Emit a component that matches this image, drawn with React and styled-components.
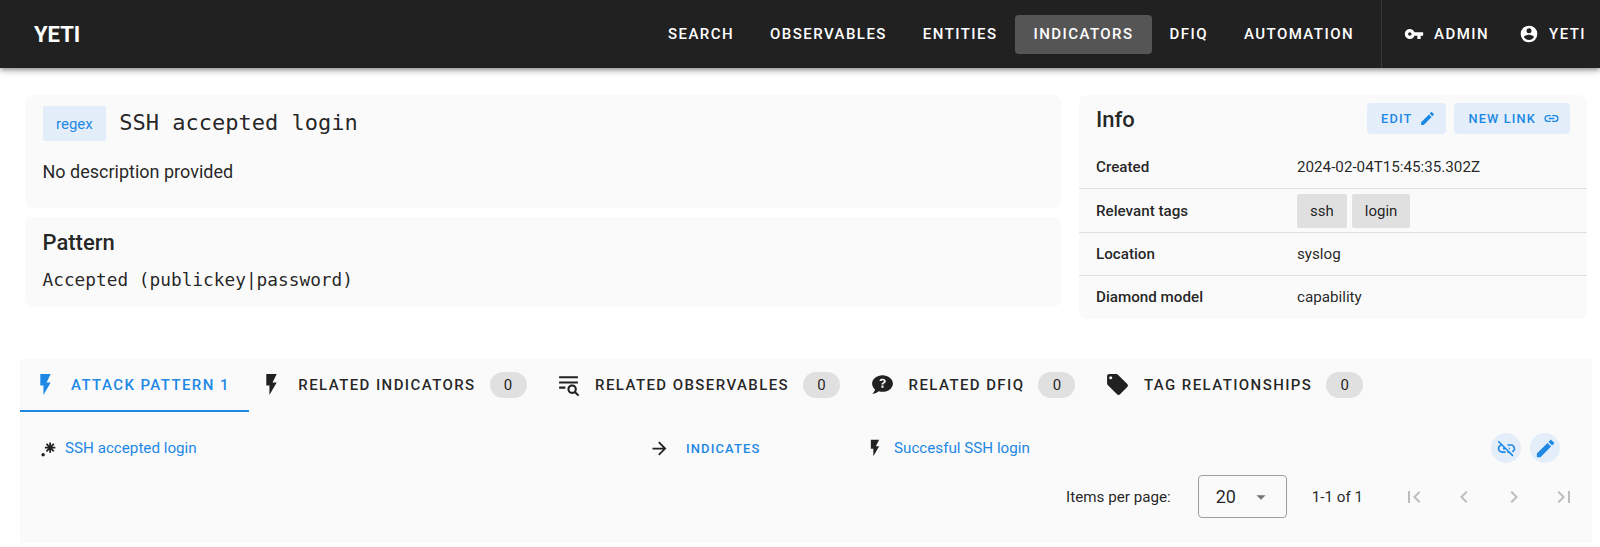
import React from 'react'
import styled, { createGlobalStyle } from 'styled-components'

const P = {
  key: 'M7 14C5.9 14 5 13.1 5 12S5.9 10 7 10 9 10.9 9 12 8.1 14 7 14M12.6 10C11.8 7.7 9.6 6 7 6C3.7 6 1 8.7 1 12S3.7 18 7 18C9.6 18 11.8 16.3 12.6 14H16V18H20V14H23V10H12.6Z',
  account: 'M12,19.2C9.5,19.2 7.29,17.92 6,16C6.03,14 10,12.9 12,12.9C14,12.9 17.97,14 18,16C16.71,17.92 14.5,19.2 12,19.2M12,5A3,3 0 0,1 15,8A3,3 0 0,1 12,11A3,3 0 0,1 9,8A3,3 0 0,1 12,5M12,2A10,10 0 0,0 2,12A10,10 0 0,0 12,22A10,10 0 0,0 22,12A10,10 0 0,0 12,2Z',
  pencil: 'M20.71,7.04C21.1,6.65 21.1,6 20.71,5.63L18.37,3.29C18,2.9 17.35,2.9 16.96,3.29L15.12,5.12L18.87,8.87M3,17.25V21H6.75L17.81,9.93L14.06,6.18L3,17.25Z',
  link: 'M3.9,12C3.9,10.29 5.29,8.9 7,8.9H11V7H7A5,5 0 0,0 2,12A5,5 0 0,0 7,17H11V15.1H7C5.29,15.1 3.9,13.71 3.9,12M8,13H16V11H8V13M17,7H13V8.9H17C18.71,8.9 20.1,10.29 20.1,12C20.1,13.71 18.71,15.1 17,15.1H13V17H17A5,5 0 0,0 22,12A5,5 0 0,0 17,7Z',
  linkOff: 'M17,7H13V8.9H17C18.71,8.9 20.1,10.29 20.1,12C20.1,13.43 19.12,14.63 17.79,15L19.19,16.4C20.88,15.58 22,13.9 22,12A5,5 0 0,0 17,7M16,11H13.81L15.81,13H16V11M2,4.27L5.11,7.38C3.29,8.12 2,9.91 2,12A5,5 0 0,0 7,17H11V15.1H7C5.29,15.1 3.9,13.71 3.9,12C3.9,10.41 5.11,9.1 6.66,8.93L8.73,11H8V13H10.73L13,15.27V17H14.73L18.74,21L20,19.74L3.27,3L2,4.27Z',
  flash: 'M7,2V13H10V22L17,10H13L17,2H7Z',
  textSearch: 'M15.5,12C18,12 20,14 20,16.5C20,17.38 19.75,18.21 19.31,18.9L22.39,22L21,23.39L17.88,20.32C17.19,20.75 16.37,21 15.5,21C13,21 11,19 11,16.5C11,14 13,12 15.5,12M15.5,14A2.5,2.5 0 0,0 13,16.5A2.5,2.5 0 0,0 15.5,19A2.5,2.5 0 0,0 18,16.5A2.5,2.5 0 0,0 15.5,14M3,4H21V6H3V4M3,9H21V11H3V9M3,14H9V16H3V14Z',
  chat: 'M12 3C6.5 3 2 6.6 2 11C2 13.2 3.1 15.2 4.8 16.7C4.8 17.3 4.4 18.8 2 21C2 21 5.5 21 8.5 18.5C9.6 18.8 10.8 19 12 19C17.5 19 22 15.4 22 11S17.5 3 12 3M13 15H11V13H13V15M14.8 10C14.5 10.4 14.1 10.6 13.7 10.8C13.4 11 13.3 11.1 13.2 11.3C13 11.5 13 11.7 13 12H11C11 11.5 11.1 11.2 11.3 10.9C11.5 10.7 11.9 10.4 12.4 10.1C12.7 10 12.9 9.8 13 9.6C13.1 9.4 13.2 9.1 13.2 8.9C13.2 8.6 13.1 8.4 12.9 8.2C12.7 8 12.4 7.9 12.1 7.9C11.8 7.9 11.6 8 11.4 8.1C11.2 8.2 11.1 8.4 11.1 8.7H9.1C9.2 8 9.5 7.4 10 7C10.5 6.6 11.2 6.5 12.1 6.5C13 6.5 13.8 6.7 14.3 7.1C14.8 7.5 15.1 8.1 15.1 8.8C15.2 9.2 15 9.6 14.8 10Z',
  tag: 'M5.5,7A1.5,1.5 0 0,1 4,5.5A1.5,1.5 0 0,1 5.5,4A1.5,1.5 0 0,1 7,5.5A1.5,1.5 0 0,1 5.5,7M21.41,11.58L12.41,2.58C12.05,2.22 11.55,2 11,2H4C2.89,2 2,2.89 2,4V11C2,11.55 2.22,12.05 2.59,12.41L11.58,21.41C11.95,21.77 12.45,22 13,22C13.55,22 14.05,21.77 14.41,21.41L21.41,14.41C21.78,14.05 22,13.55 22,13C22,12.45 21.77,11.94 21.41,11.58Z',
  arrow: 'M4,11V13H16L10.5,18.5L11.92,19.92L19.84,12L11.92,4.08L10.5,5.5L16,11H4Z',
  regex: 'M16,16.92C15.67,16.97 15.34,17 15,17C14.66,17 14.33,16.97 14,16.92V13.41L11.5,15.89C11,15.5 10.5,15 10.11,14.5L12.59,12H9.08C9.03,11.67 9,11.34 9,11C9,10.66 9.03,10.33 9.08,10H12.59L10.11,7.5C10.3,7.25 10.5,7 10.76,6.76V6.76C11,6.5 11.25,6.3 11.5,6.11L14,8.59V5.08C14.33,5.03 14.66,5 15,5C15.34,5 15.67,5.03 16,5.08V8.59L18.5,6.11C19,6.5 19.5,7 19.89,7.5L17.41,10H20.92C20.97,10.33 21,10.66 21,11C21,11.34 20.97,11.67 20.92,12H17.41L19.89,14.5C19.7,14.75 19.5,15 19.24,15.24V15.24C19,15.5 18.75,15.7 18.5,15.89L16,13.41V16.92H16V16.92M5,19A2,2 0 0,1 7,17A2,2 0 0,1 9,19A2,2 0 0,1 7,21A2,2 0 0,1 5,19H5Z',
  first: 'M18.41,16.59L13.82,12L18.41,7.41L17,6L11,12L17,18L18.41,16.59M6,6H8V18H6V6Z',
  prev: 'M15.41,16.58L10.83,12L15.41,7.41L14,6L8,12L14,18L15.41,16.58Z',
  next: 'M8.59,16.58L13.17,12L8.59,7.41L10,6L16,12L10,18L8.59,16.58Z',
  last: 'M5.59,7.41L10.18,12L5.59,16.59L7,18L13,12L7,6L5.59,7.41M16,6H18V18H16V6Z',
  caret: 'M7,10L12,15L17,10H7Z',
}

const Global = createGlobalStyle`
  html, body { margin: 0; background: #fff; }
  body {
    font-family: Roboto, "Liberation Sans", sans-serif;
    color: rgba(0, 0, 0, 0.87);
  }
`

const Svg = styled.svg`
  display: block;
  flex: none;
  fill: currentColor;
`

const Icon = ({ name, size = 24 }) => (
  <Svg viewBox="0 0 24 24" width={size} height={size}><path d={P[name]} /></Svg>
)

const Bar = styled.header`
  height: 68px;
  background: #212121;
  color: #fff;
  display: flex;
  align-items: center;
  padding-left: 34px;
  box-shadow: 0 2px 4px -1px rgba(0,0,0,.3), 0 4px 5px rgba(0,0,0,.14), 0 1px 10px rgba(0,0,0,.12);
  position: relative;
`

const Logo = styled.div`
  font-size: 22px;
  font-weight: 700;
  margin-right: auto;
`

const NavBtn = styled.div`
  height: 39px;
  padding: 0 ${p => p.$pad || 18}px;
  border-radius: 4px;
  display: flex;
  align-items: center;
  gap: 10px;
  font-size: 15px;
  font-weight: 480;
  letter-spacing: 1.45px;
  text-transform: uppercase;
  background: ${p => (p.$active ? '#555555' : 'transparent')};
`

const Divider = styled.div`
  align-self: stretch;
  width: 1px;
  background: #3a3a3a;
  margin: 0 6px 0 9px;
`

const Main = styled.main`
  padding: 27px 8px 4px 20px;
`

const Top = styled.div`
  display: grid;
  grid-template-columns: 1fr 508px;
  column-gap: 18px;
  padding: 0 5px;
  align-items: start;
`

const Stack = styled.div`
  display: flex;
  flex-direction: column;
  gap: 9px;
`

const Card = styled.section`
  background: #fafafa;
  border-radius: 8px;
  padding: ${p => p.$pad || '11px 17.5px'};
  height: ${p => p.$h}px;
  box-sizing: border-box;
`

const TitleRow = styled.div`
  display: flex;
  align-items: center;
  gap: 13px;
  height: 35px;
  margin-bottom: 17px;
`

const Chip = styled.span`
  display: inline-flex;
  align-items: center;
  justify-content: center;
  border-radius: 2px;
  font-size: 15px;
  height: ${p => p.$h || 35}px;
  padding: 0 ${p => (p.$grey ? 13 : 13.5)}px;
  color: ${p => (p.$grey ? 'rgba(0,0,0,.87)' : '#1e88e5')};
  background: ${p => (p.$grey ? '#e0e0e0' : '#e3eefa')};
`

const MonoTitle = styled.div`
  font-family: "DejaVu Sans Mono", "Liberation Mono", monospace;
  font-size: 22px;
  margin-top: -2px;
`

const Body = styled.div`
  font-size: 18px;
  line-height: 28px;
`

const H = styled.h2`
  margin: 0;
  font-size: 22px;
  font-weight: 480;
  line-height: 32px;
`

const MonoText = styled.div`
  font-family: "DejaVu Sans Mono", "Liberation Mono", monospace;
  font-size: 17.8px;
  line-height: 24px;
  margin-top: 9px;
`

const InfoHead = styled.div`
  display: flex;
  align-items: center;
  gap: 8px;
  height: 50px;
  padding: 0 17px;
`

const Spacer = styled.div`
  flex: 1;
`

const SmallBtn = styled.div`
  height: 31px;
  padding: 0 10px 0 14px;
  display: flex;
  align-items: center;
  gap: 7px;
  border-radius: 4px;
  background: #e3eefa;
  color: #1e88e5;
  font-size: 12.8px;
  font-weight: 480;
  letter-spacing: 1.14px;
  text-transform: uppercase;
  margin-top: -4px;
`

const Row = styled.div`
  display: grid;
  grid-template-columns: 201px 1fr;
  align-items: center;
  height: 43.4px;
  padding: 0 17px;
  font-size: 15.2px;
  border-top: ${p => (p.$first ? '0' : '1px solid #e0e0e0')};
  box-sizing: border-box;
`

const Label = styled.div`
  font-weight: 480;
`

const Chips = styled.div`
  display: flex;
  gap: 5px;
`

const Panel = styled.section`
  margin-top: 40px;
  background: #fafafa;
  height: 184px;
`

const Tabs = styled.div`
  display: flex;
  height: 53px;
`

const Tab = styled.div`
  display: flex;
  align-items: center;
  height: 53px;
  box-sizing: border-box;
  padding: 0 19px 0 ${p => (p.$active ? 13 : 10.5)}px;
  gap: ${p => (p.$active ? 13 : 14)}px;
  font-size: 15px;
  font-weight: 480;
  letter-spacing: 1.41px;
  text-transform: uppercase;
  color: ${p => (p.$active ? '#1e88e5' : 'rgba(0,0,0,.87)')};
  border-bottom: 2px solid ${p => (p.$active ? '#1e88e5' : 'transparent')};
`

const Count = styled.span`
  width: 37px;
  height: 26px;
  border-radius: 13px;
  background: #e0e0e0;
  display: flex;
  align-items: center;
  justify-content: center;
  font-weight: 400;
  letter-spacing: 0;
`

const LinkRow = styled.div`
  display: grid;
  grid-template-columns: 612px 216px 1fr auto;
  align-items: center;
  height: 30px;
  margin-top: 21px;
  padding: 0 32px 0 17px;
  font-size: 15.2px;
  color: #1e88e5;
`

const Cell = styled.div`
  display: flex;
  align-items: center;
  gap: ${p => p.$gap || 7}px;
`

const Black = styled.span`
  color: rgba(0, 0, 0, 0.87);
  display: flex;
`

const Rel = styled.span`
  font-size: 13px;
  font-weight: 480;
  letter-spacing: 1.1px;
  text-transform: uppercase;
  margin-left: 9px;
`

const Round = styled.div`
  width: 30px;
  height: 30px;
  border-radius: 50%;
  background: #e3eefa;
  color: #1e88e5;
  display: flex;
  align-items: center;
  justify-content: center;
`

const Pager = styled.div`
  display: flex;
  align-items: center;
  justify-content: flex-end;
  padding-right: 16px;
  margin-top: 12px;
  font-size: 15.2px;
`

const Select = styled.div`
  width: 89px;
  height: 43px;
  box-sizing: border-box;
  border: 1px solid #9e9e9e;
  border-radius: 4px;
  display: flex;
  align-items: center;
  justify-content: space-between;
  padding: 0 14px 0 17px;
  font-size: 18px;
  margin: 0 25px 0 27px;
  color: rgba(0,0,0,.87);
`

const Caret = styled.span`
  color: #757575;
  display: flex;
`

const PageBtns = styled.div`
  display: flex;
  gap: 26px;
  margin-left: 39px;
  color: #bdbdbd;
`

const navItems = ['Search', 'Observables', 'Entities', 'Indicators', 'DFIQ', 'Automation']
const rows = [
  ['Created', '2024-02-04T15:45:35.302Z'],
  ['Location', 'syslog'],
  ['Diamond model', 'capability'],
]

export default function App() {
  return (
    <>
      <Global />
      <Bar>
        <Logo>YETI</Logo>
        {navItems.map(n => <NavBtn key={n} $active={n === 'Indicators'}>{n}</NavBtn>)}
        <Divider />
        <NavBtn $pad={16}><Icon name="key" size={20} />Admin</NavBtn>
        <NavBtn $pad={14}><Icon name="account" size={20} />Yeti</NavBtn>
      </Bar>
      <Main>
        <Top>
          <Stack>
            <Card $h={113}>
              <TitleRow>
                <Chip>regex</Chip>
                <MonoTitle>SSH accepted login</MonoTitle>
              </TitleRow>
              <Body>No description provided</Body>
            </Card>
            <Card $h={90} $pad="10px 17.5px">
              <H>Pattern</H>
              <MonoText>Accepted (publickey|password)</MonoText>
            </Card>
          </Stack>
          <Card $h={224} $pad="0">
            <InfoHead>
              <H>Info</H>
              <Spacer />
              <SmallBtn>Edit <Icon name="pencil" size={17} /></SmallBtn>
              <SmallBtn>New link <Icon name="link" size={17} /></SmallBtn>
            </InfoHead>
            <Row $first><Label>{rows[0][0]}</Label><div>{rows[0][1]}</div></Row>
            <Row>
              <Label>Relevant tags</Label>
              <Chips><Chip $grey $h={34}>ssh</Chip><Chip $grey $h={34}>login</Chip></Chips>
            </Row>
            <Row><Label>{rows[1][0]}</Label><div>{rows[1][1]}</div></Row>
            <Row><Label>{rows[2][0]}</Label><div>{rows[2][1]}</div></Row>
          </Card>
        </Top>
        <Panel>
          <Tabs>
            <Tab $active><Icon name="flash" size={25} />Attack pattern 1</Tab>
            <Tab><Icon name="flash" size={25} />Related indicators<Count>0</Count></Tab>
            <Tab><Icon name="textSearch" size={25} />Related observables<Count>0</Count></Tab>
            <Tab><Icon name="chat" size={25} />Related DFIQ<Count>0</Count></Tab>
            <Tab><Icon name="tag" size={25} />Tag relationships<Count>0</Count></Tab>
          </Tabs>
          <LinkRow>
            <Cell><Black><Icon name="regex" size={21} /></Black>SSH accepted login</Cell>
            <Cell><Black><Icon name="arrow" size={21} /></Black><Rel>Indicates</Rel></Cell>
            <Cell $gap={9}><Black><Icon name="flash" size={20} /></Black>Succesful SSH login</Cell>
            <Cell $gap={9}>
              <Round><Icon name="linkOff" size={21} /></Round>
              <Round><Icon name="pencil" size={23} /></Round>
            </Cell>
          </LinkRow>
          <Pager>
            Items per page:
            <Select>20<Caret><Icon name="caret" size={22} /></Caret></Select>
            1-1 of 1
            <PageBtns>
              <Icon name="first" size={24} />
              <Icon name="prev" size={24} />
              <Icon name="next" size={24} />
              <Icon name="last" size={24} />
            </PageBtns>
          </Pager>
        </Panel>
      </Main>
    </>
  )
}
